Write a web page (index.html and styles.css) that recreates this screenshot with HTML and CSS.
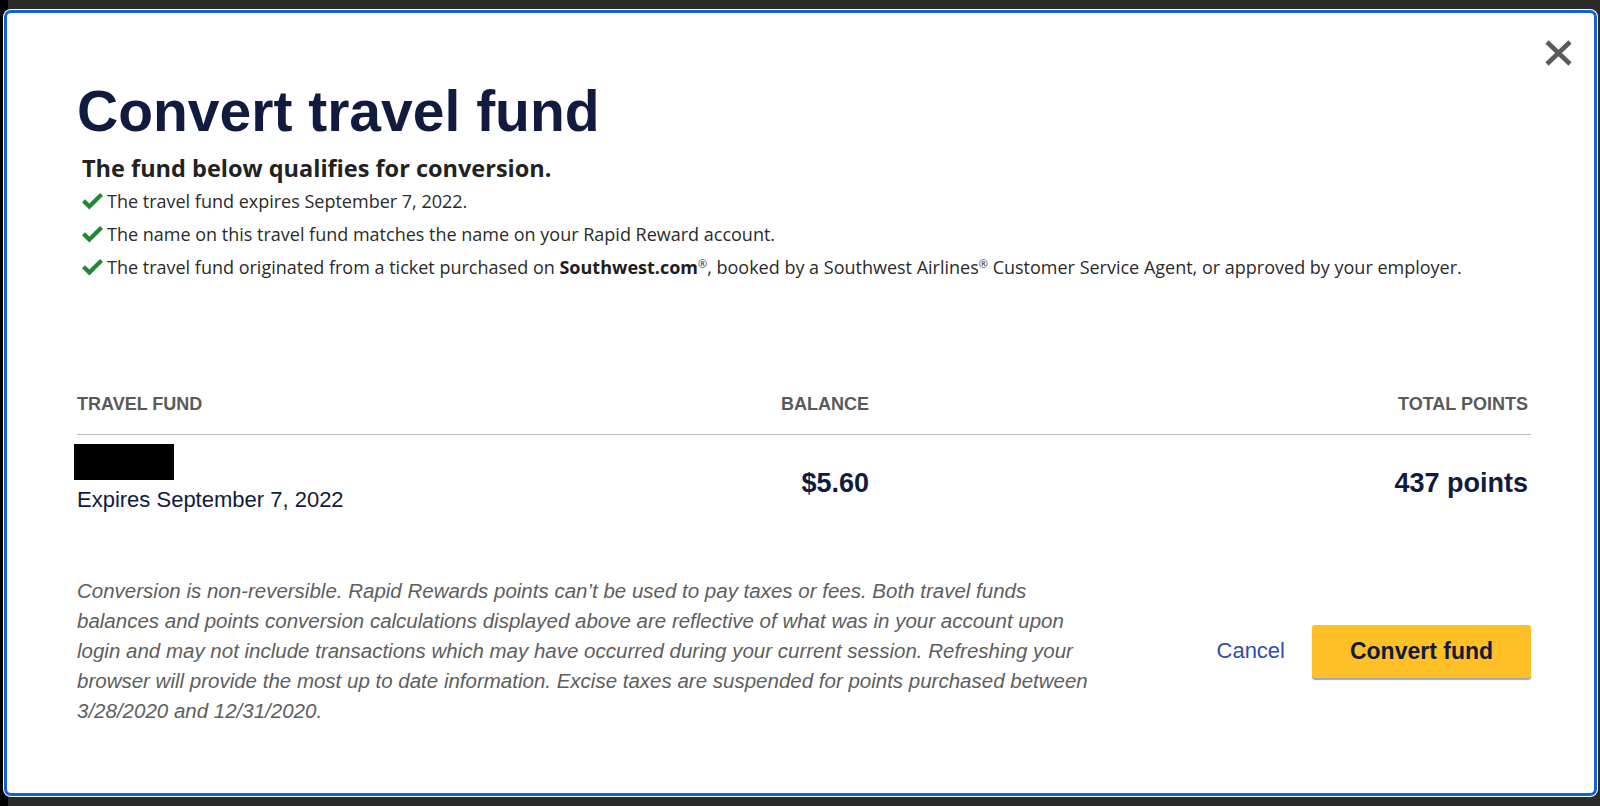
FILE: index.html
```html
<!DOCTYPE html>
<html lang="en">
<head>
<meta charset="utf-8">
<title>Convert travel fund</title>
<link rel="stylesheet" href="styles.css">
</head>
<body>
<div class="modal">
  <button class="close" aria-label="Close">
    <svg viewBox="0 0 29 28" width="29" height="28"><path d="M3 3 L26 25 M26 3 L3 25" stroke="#5a5a5a" stroke-width="4.6" fill="none"/></svg>
  </button>
  <h1 class="title">Convert travel fund</h1>
  <div class="qualify">
    <h2 class="qualify-head">The fund below qualifies for conversion.</h2>
    <ul class="checks">
      <li class="check"><svg class="tick" viewBox="0 0 20 16" width="21" height="17"><polygon points="0,8.6 2.8,5.8 7,10 17.2,0 20,2.8 7,15.6" fill="#1f8a32"/></svg><span>The travel fund expires September 7, 2022.</span></li>
      <li class="check"><svg class="tick" viewBox="0 0 20 16" width="21" height="17"><polygon points="0,8.6 2.8,5.8 7,10 17.2,0 20,2.8 7,15.6" fill="#1f8a32"/></svg><span>The name on this travel fund matches the name on your Rapid Reward account.</span></li>
      <li class="check"><svg class="tick" viewBox="0 0 20 16" width="21" height="17"><polygon points="0,8.6 2.8,5.8 7,10 17.2,0 20,2.8 7,15.6" fill="#1f8a32"/></svg><span>The travel fund originated from a ticket purchased on <b>Southwest.com</b><sup>®</sup>, booked by a Southwest Airlines<sup>®</sup> Customer Service Agent, or approved by your employer.</span></li>
    </ul>
  </div>

  <div class="table">
    <div class="th">TRAVEL FUND</div>
    <div class="th right">BALANCE</div>
    <div class="th right last">TOTAL POINTS</div>

    <div class="td fund">
      <div class="redact"></div>
      <div class="expires">Expires September 7, 2022</div>
    </div>
    <div class="td right amount">$5.60</div>
    <div class="td right amount last">437 points</div>
  </div>

  <div class="footer">
    <p class="disclaimer">Conversion is non-reversible. Rapid Rewards points can’t be used to pay taxes or fees. Both travel funds balances and points conversion calculations displayed above are reflective of what was in your account upon login and may not include transactions which may have occurred during your current session. Refreshing your browser will provide the most up to date information. Excise taxes are suspended for points purchased between 3/28/2020 and 12/31/2020.</p>
    <div class="actions">
      <a class="cancel" href="#">Cancel</a>
      <button class="primary">Convert fund</button>
    </div>
  </div>
</div>
</body>
</html>
```

FILE: styles.css
```css
html, body {
  margin: 0;
  height: 100%;
}
body {
  background: linear-gradient(to right, #000 0, #000 8px, #2a2a2a 8px);
  padding: 10px 3px 0 4px;
  box-sizing: border-box;
  font-family: "Liberation Sans", Arial, sans-serif;
  overflow: hidden;
}
.modal {
  position: relative;
  box-sizing: border-box;
  height: 786px;
  background: #fff;
  border: 3px solid #1261d8;
  border-radius: 7px;
  box-shadow: 0 0 0 1px #fff;
  padding: 70px 63px 0 70px;
}
.close {
  position: absolute;
  top: 26px;
  right: 21px;
  width: 29px;
  height: 28px;
  padding: 0;
  border: 0;
  background: none;
  cursor: pointer;
}
.close svg { display: block; }
.title {
  margin: 0;
  font-family: "Liberation Sans", Arial, sans-serif;
  font-weight: 700;
  font-size: 57px;
  line-height: 57px;
  color: #111b40;
}
.qualify {
  padding-left: 5px;
}
.qualify-head {
  margin: 13px 0 0 0;
  font-family: "Open Sans", sans-serif;
  font-weight: 700;
  font-size: 23.5px;
  line-height: 30px;
  color: #222;
}
.checks {
  list-style: none;
  margin: 2px 0 0 0;
  padding: 0;
}
.check {
  display: flex;
  align-items: center;
  gap: 4px;
  font-family: "Open Sans", sans-serif;
  font-size: 18px;
  line-height: 33px;
  color: #2b2b2b;
}
.check b { font-weight: 700; color: #1e1e1e; }
.check sup { font-size: 11px; line-height: 0; vertical-align: 6px; }
.tick { flex: none; }

.table {
  display: grid;
  grid-template-columns: 492px 300px 1fr;
  margin-top: 110px;
}
.th {
  font-weight: 700;
  font-size: 18px;
  line-height: 20px;
  color: #5a5a5a;
  padding-bottom: 20px;
  border-bottom: 1px solid #bdbdbd;
}
.right { text-align: right; }
.last { padding-right: 3px; }
.td { padding-top: 9px; }
.redact {
  width: 100px;
  height: 36px;
  background: #000;
  margin-left: -3px;
}
.expires {
  margin-top: 7px;
  font-size: 22px;
  line-height: 26px;
  color: #111b40;
}
.amount {
  padding-top: 33px;
  font-weight: 700;
  font-size: 27px;
  line-height: 30px;
  color: #111b40;
}
.footer {
  display: flex;
  align-items: center;
  justify-content: space-between;
  margin-top: 63px;
}
.disclaimer {
  margin: 0;
  width: 1015px;
  font-style: italic;
  font-size: 20.5px;
  line-height: 30px;
  color: #5e5e5e;
}
.actions {
  display: flex;
  align-items: center;
  gap: 27px;
}
.cancel {
  font-size: 22px;
  color: #304cb2;
  text-decoration: none;
}
.primary {
  width: 219px;
  height: 53px;
  border: 0;
  border-radius: 3px;
  background: #ffbf27;
  box-shadow: 0 2px 1px rgba(0, 0, 0, 0.35);
  font-family: "Liberation Sans", Arial, sans-serif;
  font-weight: 700;
  font-size: 23px;
  color: #111b40;
  cursor: pointer;
}
```
